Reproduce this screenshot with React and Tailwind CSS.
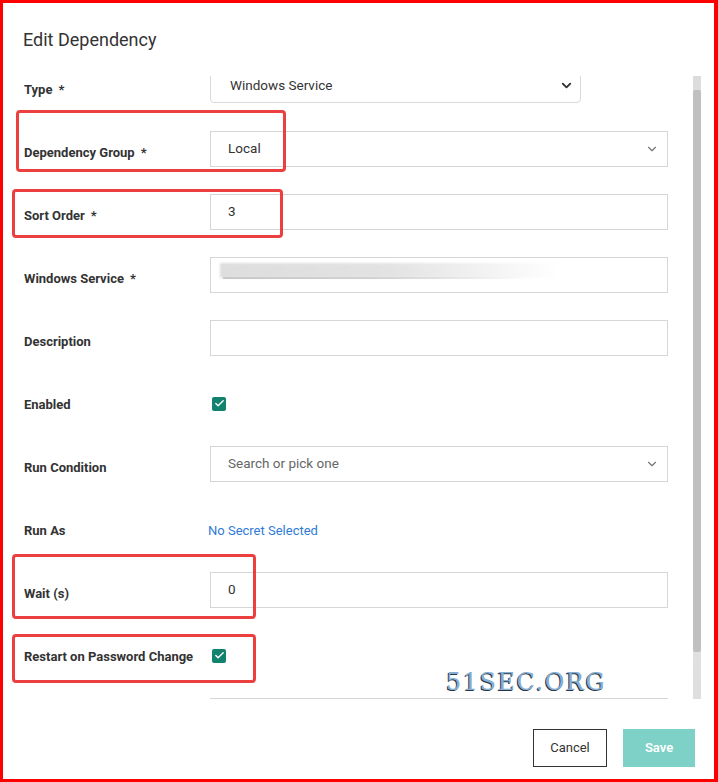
import React from "react";
import { ChevronDown, Check } from "lucide-react";

const Label = ({ text, required }) => (
  <div className="w-[186px] shrink-0 pt-[8px] text-[13px] font-bold text-[#333]">
    {text}
    {required && <span className="ml-[6px]">*</span>}
  </div>
);

const TextBox = ({ value, children }) => (
  <div className="relative flex h-[36px] flex-1 items-center border border-[#d6d6d6] bg-white pl-[17px] text-[13.5px] text-[#333]">
    {value}
    {children}
  </div>
);

const SelectBox = ({ value, muted }) => (
  <div
    className={`flex h-[36px] flex-1 items-center justify-between border border-[#d6d6d6] bg-white pl-[17px] pr-[8px] text-[13.5px] ${
      muted ? "text-[#666]" : "text-[#333]"
    }`}
  >
    <span>{value}</span>
    <ChevronDown size={14} strokeWidth={2} className="text-[#777]" />
  </div>
);

const CheckMark = () => (
  <div className="ml-[2px] mt-[6px] flex h-[14px] w-[14px] items-center justify-center rounded-[2px] bg-[#12826f]">
    <Check size={11} strokeWidth={3} className="text-white" />
  </div>
);

const Row = ({ children }) => (
  <div className="flex h-[63px] items-center pl-[21px] pr-[25px]">{children}</div>
);

export default function App() {
  return (
    <div
      className="relative flex h-[782px] w-[718px] flex-col border-b-[3px] border-l-[3px] border-r-[4px] border-t-[3px] border-[#ff0000] bg-white"
      style={{ fontFamily: "Roboto, 'Liberation Sans', sans-serif" }}
    >
      {/* header */}
      <div className="flex h-[73px] shrink-0 items-center pl-[20px] text-[18px] text-[#333]">
        Edit Dependency
      </div>

      {/* scrolling form */}
      <div className="flex h-[623px] shrink-0 overflow-hidden">
        <div className="flex-1">
          <div className="-mt-[22px]">
            <Row>
              <Label text="Type" required />
              <div className="flex h-[34px] w-[371px] items-center justify-between rounded-[4px] border border-[#d9d9d9] pl-[19px] pr-[6px] text-[13.5px] text-[#333]">
                <span>Windows Service</span>
                <ChevronDown size={15} strokeWidth={3} className="text-[#333]" />
              </div>
            </Row>
            <Row>
              <Label text="Dependency Group" required />
              <SelectBox value="Local" />
            </Row>
            <Row>
              <Label text="Sort Order" required />
              <TextBox value="3" />
            </Row>
            <Row>
              <Label text="Windows Service" required />
              <TextBox>
                <div className="absolute left-[9px] top-[5px] h-[15px] w-[340px] bg-gradient-to-r from-[#dedede] via-[#e3e3e3] to-transparent blur-[1px]" />
                <div className="absolute left-[12px] top-[19px] h-[2px] w-[300px] bg-gradient-to-r from-[#c8c8c8] via-[#d2d2d2] to-transparent" />
              </TextBox>
            </Row>
            <Row>
              <Label text="Description" />
              <TextBox />
            </Row>
            <Row>
              <Label text="Enabled" />
              <CheckMark />
            </Row>
            <Row>
              <Label text="Run Condition" />
              <SelectBox value="Search or pick one" muted />
            </Row>
            <Row>
              <Label text="Run As" />
              <div className="-ml-[2px] pt-[8px] text-[13px] text-[#2f7bd6]">
                No Secret Selected
              </div>
            </Row>
            <Row>
              <Label text="Wait (s)" />
              <TextBox value="0" />
            </Row>
            <Row>
              <Label text="Restart on Password Change" />
              <CheckMark />
            </Row>
            <Row>
              <Label text="" />
              <TextBox />
            </Row>
          </div>
        </div>
        {/* scrollbar */}
        <div className="w-[8px] shrink-0 bg-gradient-to-b from-[#dcdcdc] via-[#ececec] to-[#dedede]">
          <div className="mt-[14px] h-[562px] w-full rounded-[2px] bg-[#c0c0c0]" />
        </div>
        <div className="w-[13px] shrink-0" />
      </div>

      {/* footer */}
      <div className="flex flex-1 items-start justify-end gap-4 pr-[19px] pt-[30px]">
        <button className="h-[38px] w-[74px] border border-[#333] bg-white text-[13px] text-[#333]">
          Cancel
        </button>
        <button className="h-[38px] w-[72px] bg-[#7dd1c6] text-[13px] font-semibold text-white">
          Save
        </button>
      </div>

      {/* annotation boxes */}
      <div className="pointer-events-none absolute left-[13px] top-[107px] h-[62px] w-[270px] rounded-[4px] border-[3px] border-[#ec4040]" />
      <div className="pointer-events-none absolute left-[9px] top-[186px] h-[49px] w-[271px] rounded-[4px] border-[3px] border-[#ec4040]" />
      <div className="pointer-events-none absolute left-[9px] top-[551px] h-[65px] w-[244px] rounded-[4px] border-[3px] border-[#ec4040]" />
      <div className="pointer-events-none absolute left-[9px] top-[631px] h-[49px] w-[244px] rounded-[4px] border-[3px] border-[#ec4040]" />

      {/* watermark */}
      <div
        className="pointer-events-none absolute left-[443px] top-[661px] text-[24px] tracking-[1.5px] text-[#86aed2]"
        style={{
          fontFamily: "'DejaVu Serif', serif",
          textShadow: "-1px 1px 0 #2b3644",
        }}
      >
        51SEC.ORG
      </div>
    </div>
  );
}
